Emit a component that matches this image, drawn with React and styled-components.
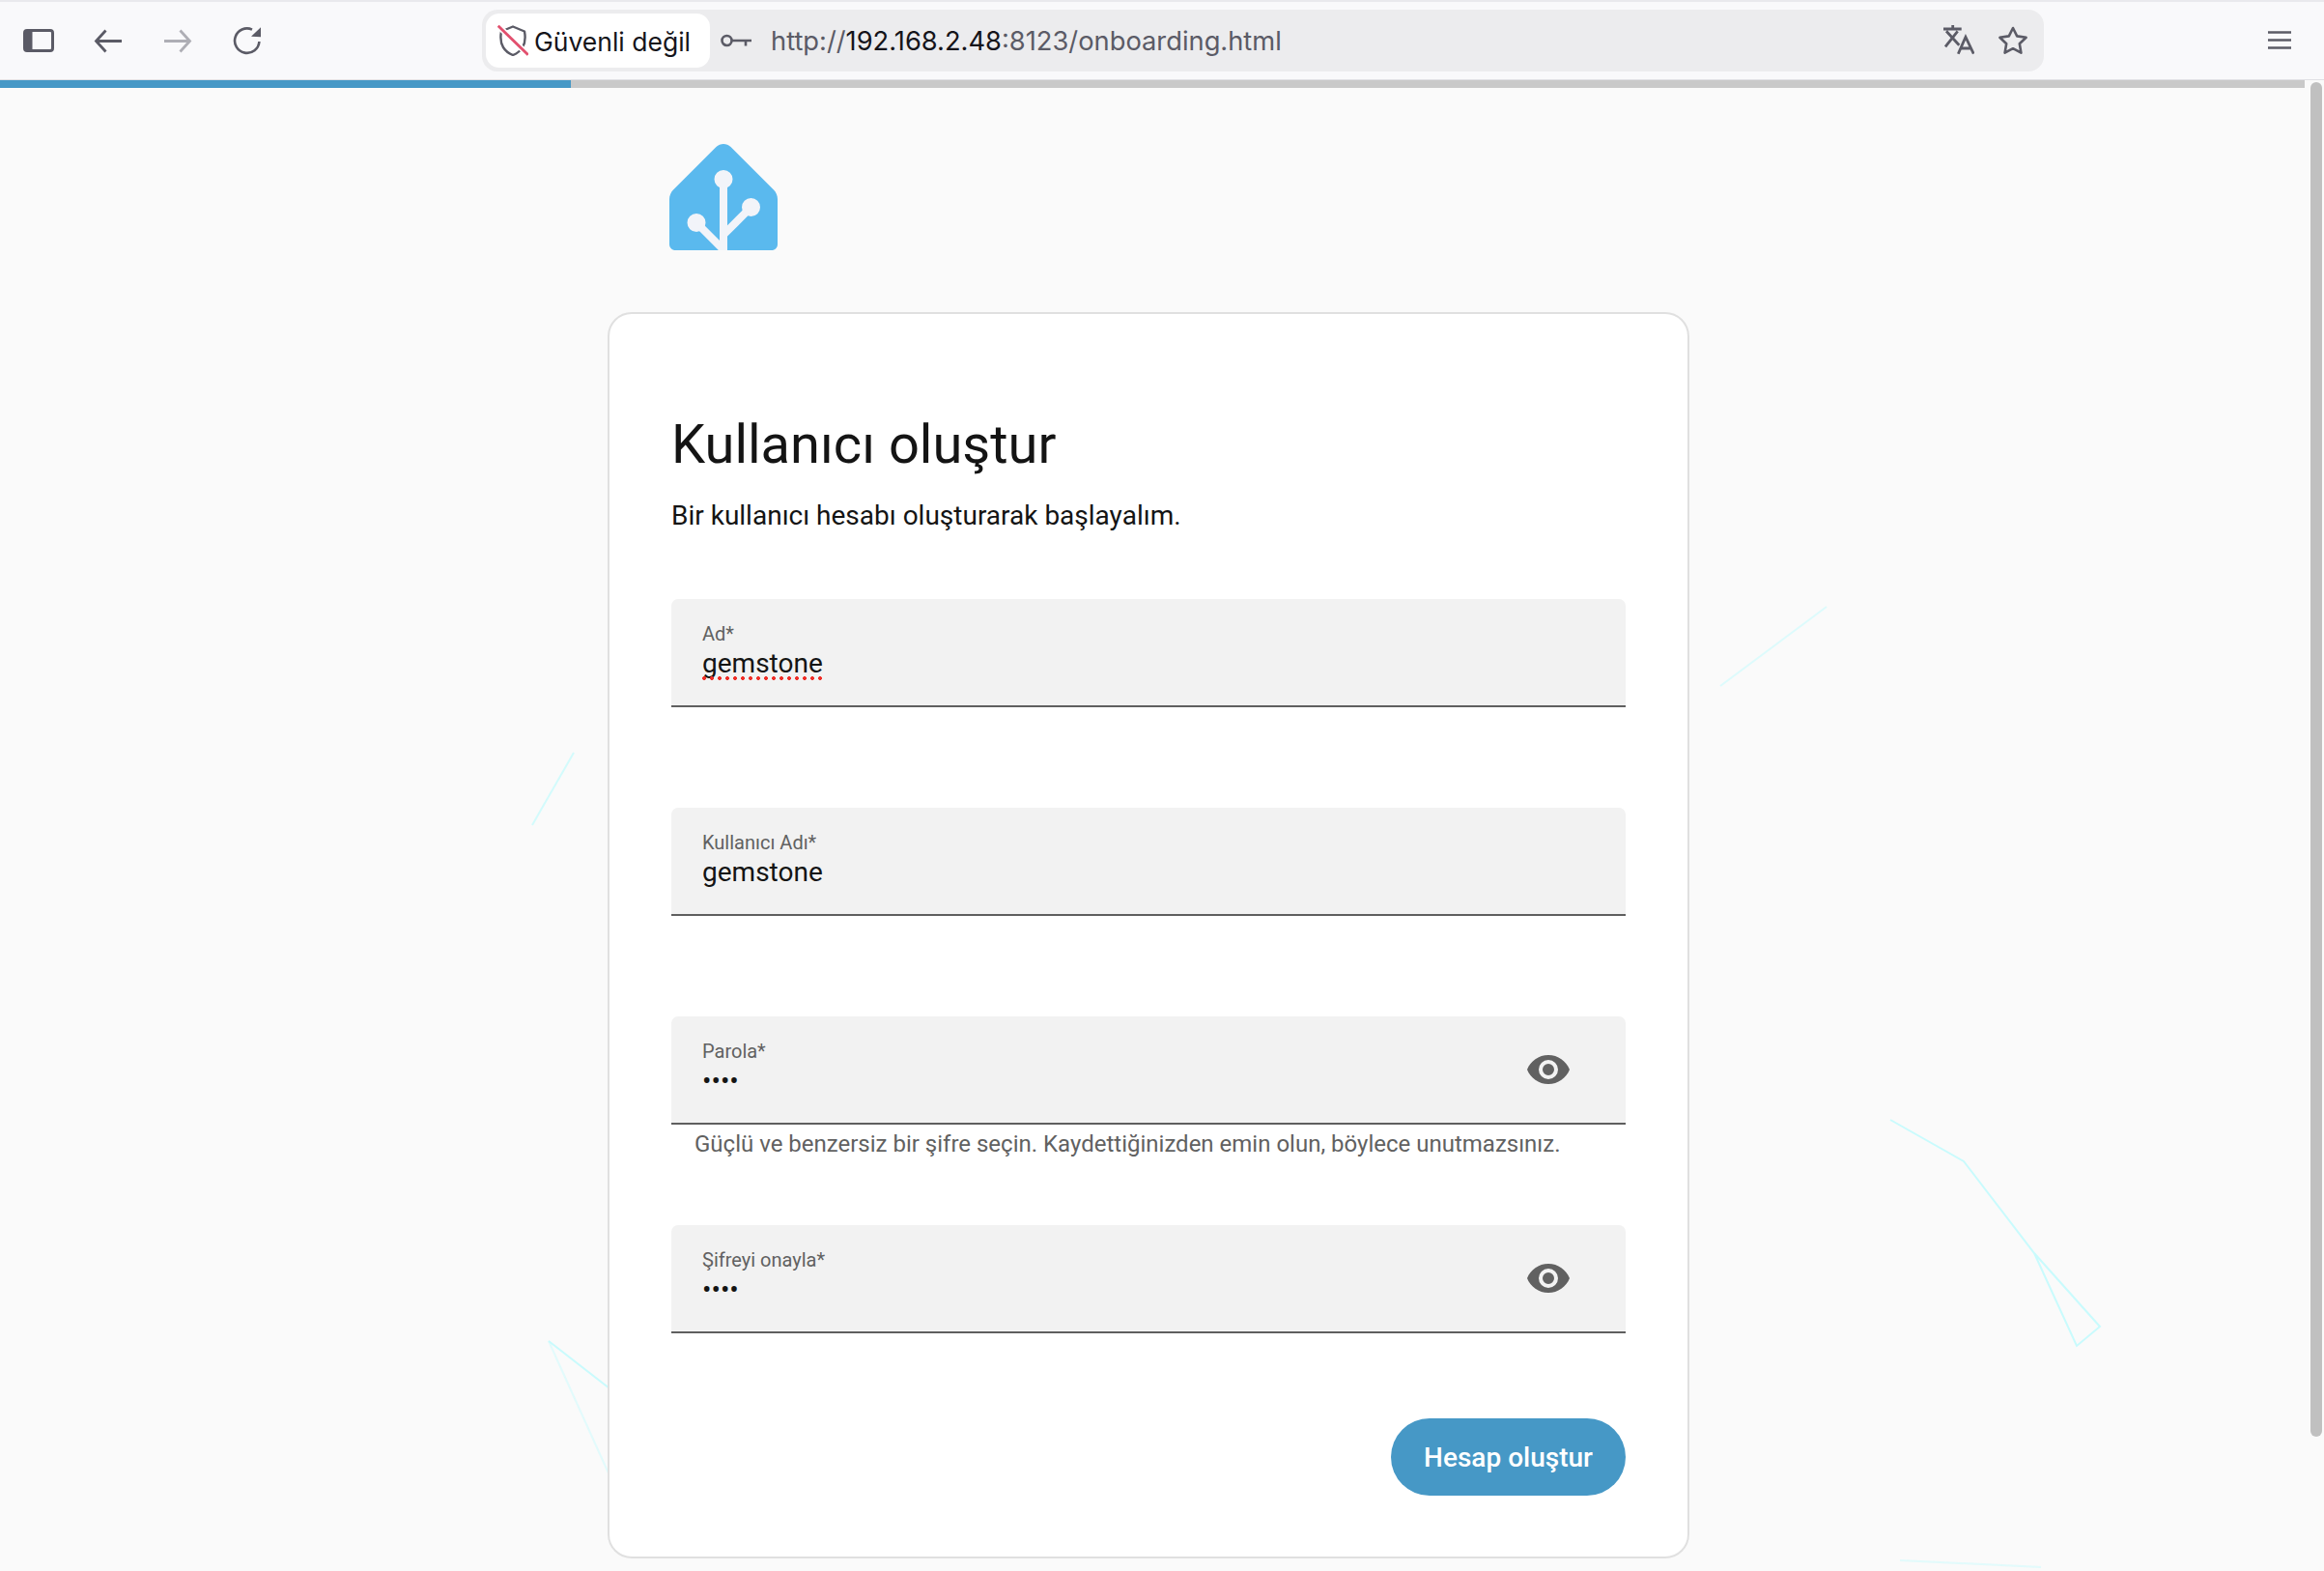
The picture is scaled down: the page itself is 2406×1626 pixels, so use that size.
import styled, { createGlobalStyle } from 'styled-components';

const GlobalStyle = createGlobalStyle`
  html, body {
    margin: 0;
    padding: 0;
    background: #fafafa;
    overflow: hidden;
  }
`;

const ICON_GREY = '#5b5b66';

function SidebarIcon() {
  return <ToolbarSvg viewBox="0 0 32 32">
    <rect x="1.5" y="5.5" width="29" height="21" rx="2.5" fill="none" stroke={ICON_GREY} strokeWidth="3"/>
    <rect x="1.5" y="5.5" width="8" height="21" fill={ICON_GREY}/>
  </ToolbarSvg>;
}

function ArrowIcon({ flipped, faded }) {
  return <ToolbarSvg viewBox="0 0 32 32" style={{ transform: flipped ? 'scaleX(-1)' : undefined }}>
    <path d="M30 16.5H4M13.5 5.5L3.5 16.5L13.5 27.5" fill="none" stroke={faded ? '#aeaeb5' : ICON_GREY} strokeWidth="2.8"/>
  </ToolbarSvg>;
}

function ReloadIcon() {
  return <ToolbarSvg viewBox="0 0 32 32">
    <path d="M21 4.6A12.7 12.7 0 1 0 28.4 17" fill="none" stroke={ICON_GREY} strokeWidth="2.6"/>
    <path d="M30 2.3V12.3L20 11.7Z" fill={ICON_GREY}/>
  </ToolbarSvg>;
}

function ShieldIcon() {
  return <ToolbarSvg viewBox="0 0 32 32">
    <path d="M16 1.5L28 6.5C29 12 29 18 26 23C23.5 27 20 29.5 16 31C12 29.5 8.5 27 6 23C3 18 3 12 4 6.5Z" fill="none" stroke={ICON_GREY} strokeWidth="2.4" strokeLinejoin="round"/>
    <path d="M0.7 0.7L31.7 30.7" stroke="#fff" strokeWidth="6"/>
    <path d="M0.7 0.7L31.7 30.7" stroke="#e2506e" strokeWidth="2.8"/>
  </ToolbarSvg>;
}

function KeyIcon() {
  return <ToolbarSvg viewBox="0 0 32 32">
    <circle cx="6.5" cy="16" r="5" fill="none" stroke={ICON_GREY} strokeWidth="2.6"/>
    <path d="M11.5 16H32M26 16V21.5" fill="none" stroke={ICON_GREY} strokeWidth="2.6"/>
  </ToolbarSvg>;
}

function TranslateIcon() {
  return <ToolbarSvg viewBox="0 0 32 32">
    <path d="M0 4H18.7M9.7 0V4M3 6.3L16.3 20.7M14.7 6.3L2 22.3" fill="none" stroke={ICON_GREY} strokeWidth="2.8"/>
    <path d="M15.3 29.7L23 12.3L31.3 29.7M18 24H28.5" fill="none" stroke={ICON_GREY} strokeWidth="2.8"/>
  </ToolbarSvg>;
}

function StarIcon() {
  return <ToolbarSvg viewBox="0 0 32 32">
    <path d="M16 3L20.2 11.4L29.6 12.8L22.8 19.3L24.4 28.6L16 24.2L7.6 28.6L9.2 19.3L2.4 12.8L11.8 11.4Z" fill="none" stroke={ICON_GREY} strokeWidth="2.6" strokeLinejoin="round"/>
  </ToolbarSvg>;
}

function MenuIcon() {
  return <ToolbarSvg viewBox="0 0 32 32">
    <path d="M4 7.5H28M4 15.5H28M4 23.5H28" fill="none" stroke={ICON_GREY} strokeWidth="2.6"/>
  </ToolbarSvg>;
}

function HomeLogo() {
  return <LogoSvg viewBox="0 0 112 110">
    <path d="M48.5 3L4 47.5C1.5 50 0 53.5 0 57V104C0 107.3 2.7 110 6 110H106C109.3 110 112 107.3 112 104V57C112 53.5 110.5 50 108 47.5L63.5 3C59.3 -1 52.7 -1 48.5 3Z" fill="#5ab9ee"/>
    <g fill="#f2f4f9" stroke="#f2f4f9" strokeWidth="8">
      <circle cx="56" cy="36.5" r="5.5"/>
      <circle cx="84.5" cy="65.5" r="5.5"/>
      <circle cx="28" cy="81.5" r="5.5"/>
      <path d="M56 36.5V110M84.5 65.5L56 94M28 81.5L54 107.5" fill="none"/>
    </g>
  </LogoSvg>;
}

function EyeIcon() {
  return <EyeSvg viewBox="0 0 24 24">
    <path d="M12,9A3,3 0 0,0 9,12A3,3 0 0,0 12,15A3,3 0 0,0 15,12A3,3 0 0,0 12,9M12,17A5,5 0 0,1 7,12A5,5 0 0,1 12,7A5,5 0 0,1 17,12A5,5 0 0,1 12,17M12,4.5C7,4.5 2.73,7.61 1,12C2.73,16.39 7,19.5 12,19.5C17,19.5 21.27,16.39 23,12C21.27,7.61 17,4.5 12,4.5Z" fill="#616161"/>
  </EyeSvg>;
}

function FormField({ label, value, misspelled, secret, helper }) {
  return <FieldBlock>
    <Field>
      <FieldText>
        <FieldLabel>{label}</FieldLabel>
        <FieldValue>
          {misspelled ? <Misspelled>{value}</Misspelled> : value}
        </FieldValue>
      </FieldText>
      {secret && <EyeIcon/>}
    </Field>
    {helper && <Helper>{helper}</Helper>}
  </FieldBlock>;
}

export default function App() {
  return <Page>
    <GlobalStyle/>
    <Backdrop viewBox="0 0 2406 1626">
      <g fill="none" stroke="#c9fbfd" strokeWidth="2">
        <path d="M1957 1159L2033 1202L2106 1297L2174 1373L2150 1393L2106 1297"/>
        <path d="M631 1437L568 1388"/>
        <path d="M568 1388L631 1527" opacity="0.5"/>
        <path d="M1891 628L1781 710" opacity="0.6"/>
        <path d="M594 779L551 854" opacity="0.8"/>
        <path d="M1967 1615L2113 1622" opacity="0.5"/>
      </g>
    </Backdrop>
    <TopEdge/>
    <Toolbar>
      <SidebarIcon/>
      <ArrowIcon/>
      <ArrowIcon flipped faded/>
      <ReloadIcon/>
      <UrlBar>
        <Identity>
          <ShieldIcon/>
          <IdentityText>Güvenli değil</IdentityText>
        </Identity>
        <KeySlot><KeyIcon/></KeySlot>
        <Url>http://<UrlHost>192.168.2.48</UrlHost>:8123/onboarding.html</Url>
        <UrlActions>
          <TranslateIcon/>
          <StarIcon/>
        </UrlActions>
      </UrlBar>
      <MenuSlot><MenuIcon/></MenuSlot>
    </Toolbar>
    <ProgressTrack>
      <ProgressFill/>
    </ProgressTrack>
    <Content>
      <Column>
        <HomeLogo/>
        <Card>
          <Title>Kullanıcı oluştur</Title>
          <Intro>Bir kullanıcı hesabı oluşturarak başlayalım.</Intro>
          <FormField label="Ad*" value="gemstone" misspelled/>
          <FormField label="Kullanıcı Adı*" value="gemstone"/>
          <FormField
            label="Parola*"
            value="••••"
            secret
            helper="Güçlü ve benzersiz bir şifre seçin. Kaydettiğinizden emin olun, böylece unutmazsınız."/>
          <FormField label="Şifreyi onayla*" value="••••" secret/>
          <Actions>
            <SubmitButton>Hesap oluştur</SubmitButton>
          </Actions>
        </Card>
      </Column>
    </Content>
    <ScrollThumb/>
  </Page>;
}

const Page = styled.div`
  background: #fafafa;
  color: #141414;
  display: flex;
  flex-direction: column;
  font-family: Roboto, "Liberation Sans", sans-serif;
  height: 1626px;
  overflow: hidden;
  position: relative;
  width: 2406px;
`;

const Backdrop = styled.svg`
  height: 1626px;
  left: 0;
  position: absolute;
  top: 0;
  width: 2406px;
`;

const TopEdge = styled.div`
  background: #e9e9ed;
  flex: none;
  height: 2px;
  position: relative;
`;

const Toolbar = styled.div`
  align-items: center;
  background: #f9f9fb;
  border-bottom: 1px solid #e0e0e4;
  box-sizing: border-box;
  display: flex;
  flex: none;
  gap: 40px;
  height: 81px;
  padding: 0 0 1px 24px;
  position: relative;
`;

const ToolbarSvg = styled.svg`
  display: block;
  flex: none;
  height: 32px;
  width: 32px;
`;

const UrlBar = styled.div`
  align-items: center;
  background: #ececee;
  border-radius: 16px;
  box-sizing: border-box;
  display: flex;
  flex: none;
  height: 64px;
  margin-left: 187px;
  padding: 4px 16px 4px 4px;
  margin-right: 188px;
  width: 1617px;
`;

const Identity = styled.div`
  align-items: center;
  background: #fff;
  border-radius: 14px;
  box-sizing: border-box;
  display: flex;
  gap: 6px;
  height: 56px;
  padding-left: 12px;
  width: 232px;
`;

const IdentityText = styled.span`
  color: #15141a;
  font-family: Inter, "Liberation Sans", sans-serif;
  font-size: 26.5px;
  padding-top: 2px;
  white-space: nowrap;
`;

const KeySlot = styled.div`
  margin-left: 11px;
`;

const Url = styled.div`
  color: #5b5b66;
  font-family: Inter, "Liberation Sans", sans-serif;
  font-size: 27.3px;
  margin-left: 20px;
  padding-top: 2px;
  white-space: nowrap;
`;

const UrlHost = styled.span`
  color: #15141a;
`;

const UrlActions = styled.div`
  align-items: center;
  display: flex;
  gap: 24px;
  margin-left: auto;
`;

const MenuSlot = styled.div`
  flex: none;
`;

const ProgressTrack = styled.div`
  background: #c9c9c9;
  flex: none;
  height: 8px;
  margin-right: 20px;
  position: relative;
`;

const ProgressFill = styled.div`
  background: #4698c6;
  height: 100%;
  width: 591px;
`;

const Content = styled.main`
  display: flex;
  flex: 1;
  justify-content: center;
  padding: 58px 28px 0 0;
  position: relative;
`;

const Column = styled.div`
  display: flex;
  flex-direction: column;
  width: 1120px;
`;

const LogoSvg = styled.svg`
  display: block;
  height: 110px;
  margin: 0 0 64px 64px;
  width: 112px;
`;

const Card = styled.section`
  background: #fff;
  border: 2px solid #e0e0e0;
  border-radius: 25px;
  box-sizing: border-box;
  padding: 103px 64px 63px;
  width: 1120px;
`;

const Title = styled.h1`
  font-size: 56px;
  font-weight: 400;
  line-height: 64px;
  margin: 0 0 24px;
`;

const Intro = styled.p`
  font-size: 28px;
  line-height: 36px;
  margin: 0 0 68px;
`;

const FieldBlock = styled.div`
  height: 216px;

  &:nth-of-type(4) {
    height: 112px;
  }
`;

const Field = styled.div`
  align-items: center;
  background: #f2f2f2;
  border-bottom: 2px solid #5f5f5f;
  border-radius: 7px 7px 0 0;
  box-sizing: border-box;
  display: flex;
  height: 112px;
  justify-content: space-between;
  padding: 0 56px 0 32px;
`;

const FieldText = styled.div`
  align-self: flex-start;
  padding-top: 24px;
`;

const FieldLabel = styled.div`
  color: #616161;
  font-size: 20px;
  line-height: 24px;
  margin-bottom: 1px;
`;

const FieldValue = styled.div`
  font-size: 28px;
  line-height: 36px;
`;

const Misspelled = styled.span`
  display: inline-block;
  position: relative;

  &::after {
    background-image: radial-gradient(circle at 2px 2px, #ef2f28 1.8px, transparent 2.2px);
    background-size: 8px 4px;
    bottom: 1px;
    content: '';
    height: 4px;
    left: 0;
    position: absolute;
    width: 100%;
  }
`;

const EyeSvg = styled.svg`
  display: block;
  flex: none;
  height: 48px;
  width: 48px;
`;

const Helper = styled.div`
  color: #616161;
  font-size: 24px;
  line-height: 28px;
  margin-top: 6px;
  padding-left: 24px;
`;

const Actions = styled.div`
  display: flex;
  justify-content: flex-end;
  margin-top: 88px;
`;

const SubmitButton = styled.button`
  background: #4698c6;
  border: none;
  border-radius: 40px;
  color: #fff;
  font-family: Roboto, "Liberation Sans", sans-serif;
  font-size: 28px;
  font-weight: 500;
  height: 80px;
  padding: 0;
  width: 243px;
`;

const ScrollThumb = styled.div`
  background: #c0c0c0;
  border-radius: 6px;
  height: 1402px;
  position: absolute;
  right: 2px;
  top: 85px;
  width: 12px;
`;
